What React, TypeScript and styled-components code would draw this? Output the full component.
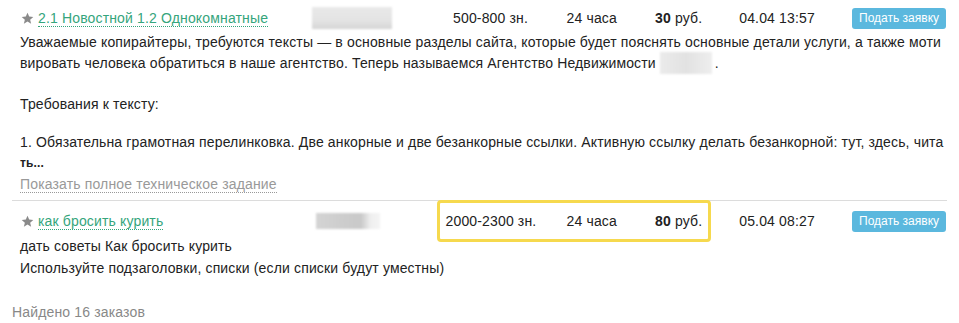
import styled, { createGlobalStyle } from "styled-components";

const GlobalStyle = createGlobalStyle`
    body {
        margin: 0;
        background: #fff;
        font-family: "Liberation Sans", Arial, sans-serif;
        letter-spacing: 0.15px;
        color: #222;
    }
`;

const Page = styled.div`
    width: 959px;
    padding: 0 12px;
    box-sizing: border-box;
`;

const Order = styled.div`
    padding: 4px 0 6px;
    border-bottom: 1px solid #dcdcdc;

    & + & {
        padding-top: 6px;
        border-bottom: none;
    }
`;

const Header = styled.div`
    display: flex;
    align-items: center;
    height: 28px;
    font-size: 14px;
`;

const TitleCell = styled.div`
    display: flex;
    align-items: center;
    width: 300px;
    padding-left: 9px;
    box-sizing: border-box;
    gap: 4px;
`;

const Title = styled.a`
    color: #35a57c;
    text-decoration: none;
    border-bottom: 1px dotted #35a57c;
    line-height: 16px;
    font-size: 14px;
`;

const BlurSlot = styled.div<{ $shift: number }>`
    width: 125px;
    padding-left: ${(p) => p.$shift}px;
    box-sizing: border-box;
    display: flex;
    align-items: center;
`;

const Blurred = styled.div<{ $w: number; $h: number; $dark?: boolean }>`
    width: ${(p) => p.$w}px;
    height: ${(p) => p.$h}px;
    background: ${(p) =>
        p.$dark
            ? "linear-gradient(90deg, #d4d4d4 0%, #cdcdcd 40%, #c9c9c9 70%, #efefef 85%, #f4f4f4 100%)"
            : "linear-gradient(180deg, #e9e9e9 0%, #e4e4e4 60%, #d6d6d6 100%)"};
    filter: blur(1px);
`;

const Terms = styled.div<{ $marked?: boolean }>`
    display: flex;
    align-items: center;
    height: 42px;
    margin: -7px 0 -7px 0;
    padding: 0 6px;
    border: 3px solid ${(p) => (p.$marked ? "#f6d94e" : "transparent")};
    border-radius: 4px;
    box-sizing: border-box;
    width: 275px;
`;

const Volume = styled.div`
    width: 90px;
    text-align: center;
    white-space: nowrap;
`;

const Time = styled.div`
    width: 110px;
    padding-left: 31px;
    box-sizing: border-box;
    white-space: nowrap;
`;

const Price = styled.div`
    flex: 1;
    text-align: right;
    white-space: nowrap;

    b {
        font-weight: bold;
    }
`;

const DateCell = styled.div`
    width: 113px;
    padding-left: 28px;
`;

const Apply = styled.button`
    margin-left: auto;
    margin-right: 1px;
    height: 21px;
    width: 94px;
    padding: 0;
    border: none;
    border-radius: 3px;
    background: #5bb8de;
    color: #fff;
    font-family: "Liberation Sans", Arial, sans-serif;
    font-size: 12px;
    cursor: pointer;
`;

const Description = styled.div<{ $lh: number }>`
    padding-left: 8px;
    padding-right: 2px;
    font-size: 14px;
    line-height: ${(p) => p.$lh}px;
    word-break: break-all;
`;

const Para = styled.p`
    margin: 0;
`;

const Gap = styled.div<{ $h: number }>`
    height: ${(p) => p.$h}px;
`;

const Cut = styled.span`
    display: block;
    font-size: 12px;
    font-weight: bold;
    line-height: 22px;
`;

const MoreLink = styled.a`
    color: #999;
    text-decoration: none;
    border-bottom: 1px dotted #999;
    font-size: 14px;
    line-height: 16px;
`;

const InlineBlur = styled.span`
    display: inline-block;
    width: 52px;
    height: 22px;
    vertical-align: -6px;
    margin: 0 3px 0 4px;
    background: linear-gradient(90deg, #ebebeb 0%, #e2e2e2 50%, #eeeeee 100%);
    filter: blur(1px);
`;

const Found = styled.div`
    margin-top: 19px;
    font-size: 14px;
    color: #888;
`;

function Star() {
    return (
        <svg width="13" height="13" viewBox="0 0 24 24">
            <path
                fill="#8a8a8a"
                d="M12 1.5l3.1 7 7.6.7-5.8 5 1.8 7.5L12 17.7l-6.7 4 1.8-7.5-5.8-5 7.6-.7z"
            />
        </svg>
    );
}

type OrderRowProps = {
    title: string;
    blur: { w: number; h: number; shift: number; dark?: boolean };
    volume: string;
    time: string;
    price: string;
    date: string;
    marked?: boolean;
    lineHeight: number;
    children: React.ReactNode;
};

function OrderRow({ title, blur, volume, time, price, date, marked, lineHeight, children }: OrderRowProps) {
    return (
        <Order>
            <Header>
                <TitleCell>
                    <Star />
                    <Title href="#">{title}</Title>
                </TitleCell>
                <BlurSlot $shift={blur.shift}>
                    <Blurred $w={blur.w} $h={blur.h} $dark={blur.dark} />
                </BlurSlot>
                <Terms $marked={marked}>
                    <Volume>{volume}</Volume>
                    <Time>{time}</Time>
                    <Price>
                        <b>{price}</b> руб.
                    </Price>
                </Terms>
                <DateCell>{date}</DateCell>
                <Apply>Подать заявку</Apply>
            </Header>
            <Description $lh={lineHeight}>{children}</Description>
        </Order>
    );
}

export default function App() {
    return (
        <Page>
            <GlobalStyle />
            <OrderRow
                title="2.1 Новостной 1.2 Однокомнатные"
                blur={{ w: 80, h: 22, shift: 0 }}
                volume="500-800 зн."
                time="24 часа"
                price="30"
                date="04.04 13:57"
                lineHeight={20}
            >
                <Para>
                    Уважаемые копирайтеры, требуются тексты — в основные разделы сайта, которые будет пояснять основные детали услуги, а также мотивировать человека обратиться в наше агентство. Теперь называемся Агентство Недвижимости
                    <InlineBlur />.
                </Para>
                <Gap $h={20} />
                <Para>Требования к тексту:</Para>
                <Gap $h={18} />
                <Para>
                    1. Обязательна грамотная перелинковка. Две анкорные и две безанкорные ссылки. Активную ссылку делать безанкорной: тут, здесь, чита
                    <Cut>ть...</Cut>
                </Para>
                <MoreLink href="#">Показать полное техническое задание</MoreLink>
            </OrderRow>
            <OrderRow
                title="как бросить курить"
                blur={{ w: 64, h: 16, shift: 4, dark: true }}
                volume="2000-2300 зн."
                time="24 часа"
                price="80"
                date="05.04 08:27"
                lineHeight={22}
                marked
            >
                <Para>дать советы Как бросить курить</Para>
                <Para>Используйте подзаголовки, списки (если списки будут уместны)</Para>
            </OrderRow>
            <Found>Найдено 16 заказов</Found>
        </Page>
    );
}
